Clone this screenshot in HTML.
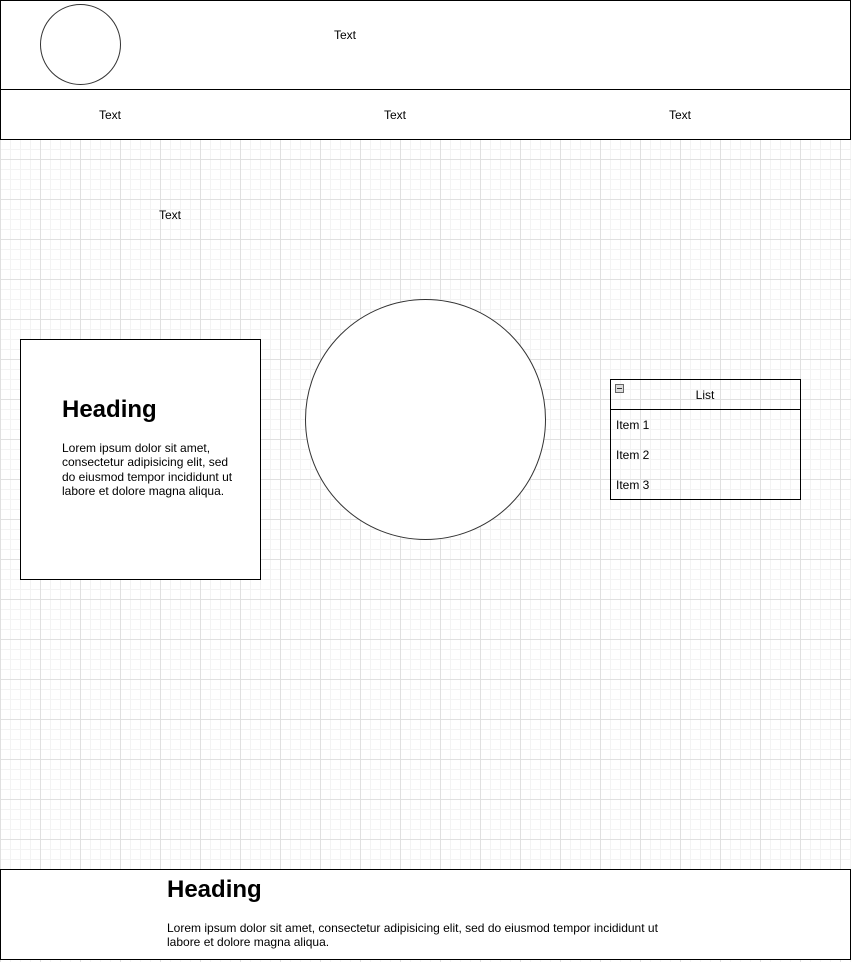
<!DOCTYPE html>
<html><head><style>
body{margin:0;width:851px;height:962px;position:relative;overflow:hidden;font-family:"Liberation Sans",Arial,sans-serif;font-size:12px;color:#000;
background-color:#fff;
background-image:
linear-gradient(#e0e0e0 1px,transparent 1px),
linear-gradient(90deg,#e0e0e0 1px,transparent 1px),
linear-gradient(#f3f3f3 1px,transparent 1px),
linear-gradient(90deg,#f3f3f3 1px,transparent 1px);
background-size:40px 40px,40px 40px,10px 10px,10px 10px;
background-position:0 -1px,0 0,0 -1px,0 0;}
.a{position:absolute;box-sizing:border-box}
.t{position:absolute;transform:translate(-50%,-50%);white-space:nowrap}
</style></head><body>
<div class="a" style="left:0;top:0;width:851px;height:90px;border:1px solid #000;background:#fff"></div>
<div class="a" style="left:40px;top:4px;width:81px;height:81px;border:1px solid #333;border-radius:50%;background:#fff"></div>
<div class="t" style="left:345px;top:35px">Text</div>
<div class="a" style="left:0;top:89px;width:851px;height:51px;border:1px solid #000;background:#fff"></div>
<div class="t" style="left:110px;top:115px">Text</div>
<div class="t" style="left:395px;top:115px">Text</div>
<div class="t" style="left:680px;top:115px">Text</div>
<div class="t" style="left:170px;top:215px">Text</div>
<div class="a" style="left:20px;top:339px;width:241px;height:241px;border:1px solid #000;background:#fff"></div>
<div class="a" style="left:62px;top:396px;font-size:24px;font-weight:bold">Heading</div>
<div class="a" style="left:62px;top:441px;width:180px;line-height:14.3px">Lorem ipsum dolor sit amet, consectetur adipisicing elit, sed do eiusmod tempor incididunt ut labore et dolore magna aliqua.</div>
<div class="a" style="left:305px;top:299px;width:241px;height:241px;border:1px solid #333;border-radius:50%;background:#fff"></div>
<div class="a" style="left:610px;top:379px;width:191px;height:121px;border:1px solid #000"></div>
<div class="a" style="left:610px;top:409px;width:191px;height:1px;background:#000"></div>
<div class="a" style="left:615px;top:384px;width:9px;height:9px;border:1px solid #666;background:#ddd"><div style="position:absolute;left:1px;top:3px;width:5px;height:1px;background:#333"></div></div>
<div class="t" style="left:705px;top:395px">List</div>
<div class="a" style="left:616px;top:418px">Item 1</div>
<div class="a" style="left:616px;top:448px">Item 2</div>
<div class="a" style="left:616px;top:478px">Item 3</div>
<div class="a" style="left:0;top:869px;width:851px;height:91px;border:1px solid #000;background:#fff"></div>
<div class="a" style="left:167px;top:876px;font-size:24px;font-weight:bold">Heading</div>
<div class="a" style="left:167px;top:921px;width:500px;line-height:14px">Lorem ipsum dolor sit amet, consectetur adipisicing elit, sed do eiusmod tempor incididunt ut labore et dolore magna aliqua.</div>
</body></html>
